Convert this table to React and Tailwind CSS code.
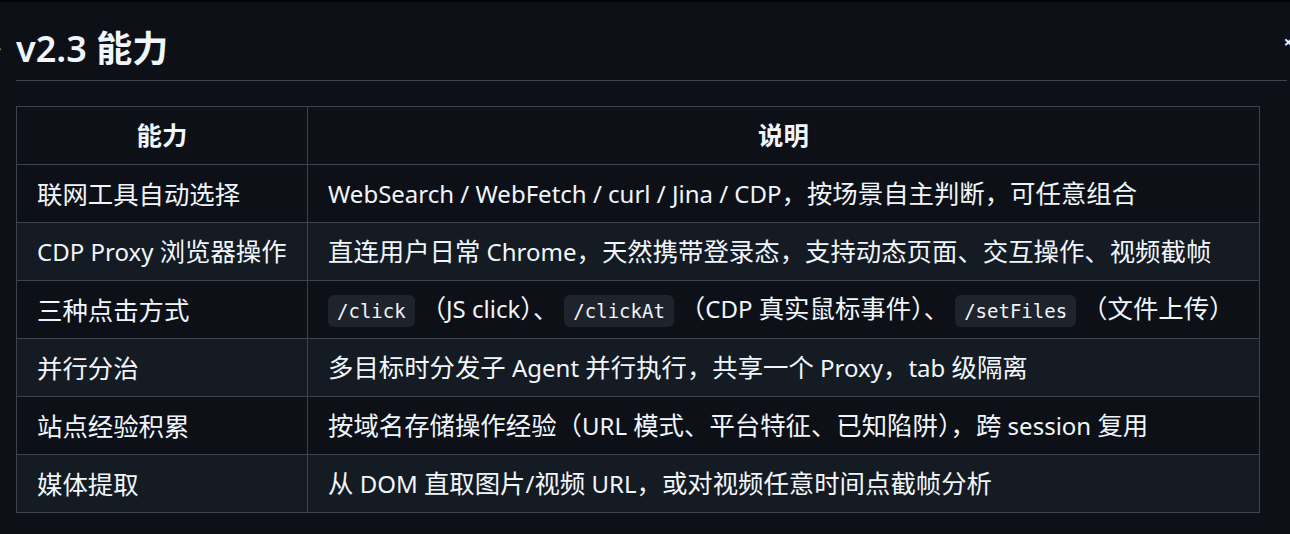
const rows = [
  ["联网工具自动选择", ["WebSearch / WebFetch / curl / Jina / CDP，按场景自主判断，可任意组合"]],
  ["CDP Proxy 浏览器操作", ["直连用户日常 Chrome，天然携带登录态，支持动态页面、交互操作、视频截帧"]],
  [
    "三种点击方式",
    [{ code: "/click", first: true }, "（JS click）、", { code: "/clickAt" }, "（CDP 真实鼠标事件）、", { code: "/setFiles" }, "（文件上传）"],
  ],
  ["并行分治", ["多目标时分发子 Agent 并行执行，共享一个 Proxy，tab 级隔离"]],
  ["站点经验积累", ["按域名存储操作经验（URL 模式、平台特征、已知陷阱），跨 session 复用"]],
  ["媒体提取", ["从 DOM 直取图片/视频 URL，或对视频任意时间点截帧分析"]],
];

// latin runs are set a bit smaller than the CJK ones
function Mixed({ text }) {
  return text.split(/([\x00-\x7F]+)/).map((part, i) =>
    /^[\x00-\x7F]+$/.test(part) ? (
      <span key={i} className="text-[24px]">{part}</span>
    ) : (
      part
    )
  );
}

function Code({ children, first }) {
  return (
    <code
      className={
        (first ? "ml-0 mr-[6px] " : "mx-[6px] ") +
        "rounded-md bg-[#1f242c] px-[9px] py-[5px] font-['DejaVu_Sans_Mono',monospace] text-[19px]"
      }
    >
      {children}
    </code>
  );
}

function Cell({ parts }) {
  return parts.map((p, i) =>
    typeof p === "string" ? (
      <Mixed key={i} text={p} />
    ) : (
      <Code key={i} first={p.first}>{p.code}</Code>
    )
  );
}

export default function App() {
  return (
    <div className="h-[534px] w-full overflow-hidden border-t-2 border-[#010409] bg-[#0d1117] font-['Noto_Sans','Noto_Sans_CJK_SC',sans-serif] text-[#f0f6fc]">
      <div className="relative ml-[16px] mr-[3px] mt-[22px] border-b border-[#3d444d] pb-[6px]">
        <span className="absolute left-[-20px] top-[10px] text-[18px] text-[#9198a1]">›</span>
        <h2 className="text-[36px] font-semibold leading-[50px]">v2.3 能力</h2>
        <span className="absolute right-[-6px] top-[6px] text-[16px] font-bold">×</span>
      </div>
      <table className="ml-[16px] mt-[25px] w-[1244px] table-fixed border-collapse text-[25.4px]">
        <colgroup>
          <col className="w-[291px]" />
          <col />
        </colgroup>
        <thead>
          <tr>
            <th className="h-[58px] border border-[#3d444d] px-[20px] font-semibold">能力</th>
            <th className="h-[58px] border border-[#3d444d] px-[20px] font-semibold">说明</th>
          </tr>
        </thead>
        <tbody>
          {rows.map(([a, b], i) => (
            <tr key={i} className={i % 2 === 1 ? "bg-[#151b23]" : ""}>
              <td className="h-[58px] border border-[#3d444d] pl-[20px] pr-0 leading-[34px] whitespace-nowrap">
                <Mixed text={a} />
              </td>
              <td className="h-[58px] border border-[#3d444d] pl-[20px] pr-0 leading-[34px] whitespace-nowrap">
                <Cell parts={b} />
              </td>
            </tr>
          ))}
        </tbody>
      </table>
    </div>
  );
}
